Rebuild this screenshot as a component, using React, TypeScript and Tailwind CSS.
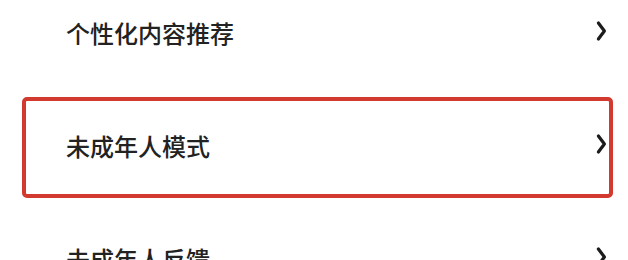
import React from "react";

const Chevron = () => (
  <svg width="11" height="22" viewBox="0 0 11 22" className="mb-[8px] shrink-0" fill="none">
    <path d="M2.4 3 Q6.5 8.5 8.4 11 Q6.5 13.5 2.4 19" stroke="#1c1c1c" strokeWidth="3.2" strokeLinecap="round" strokeLinejoin="round" />
  </svg>
);

const Row = ({ label, active }: { label: string; active?: boolean }) => (
  <div
    className={`ml-[22px] mr-[15px] h-[101px] flex items-center justify-between pl-[40px] pr-[2px] rounded-[5px] border-[4px] ${
      active ? "border-[#d23a2f]" : "border-transparent"
    }`}
  >
    <span className="mb-[4px] text-[24px] leading-none font-medium text-[#222222]">{label}</span>
    <Chevron />
  </div>
);

export default function App() {
  return (
    <div
      className="w-[628px] h-[260px] overflow-hidden bg-white"
      style={{ fontFamily: '"Noto Sans CJK SC", "Noto Sans", sans-serif' }}
    >
      <div className="-mt-[16px] flex flex-col gap-[12px]">
        <Row label="个性化内容推荐" />
        <Row label="未成年人模式" active />
        <Row label="未成年人反馈" />
      </div>
    </div>
  );
}
